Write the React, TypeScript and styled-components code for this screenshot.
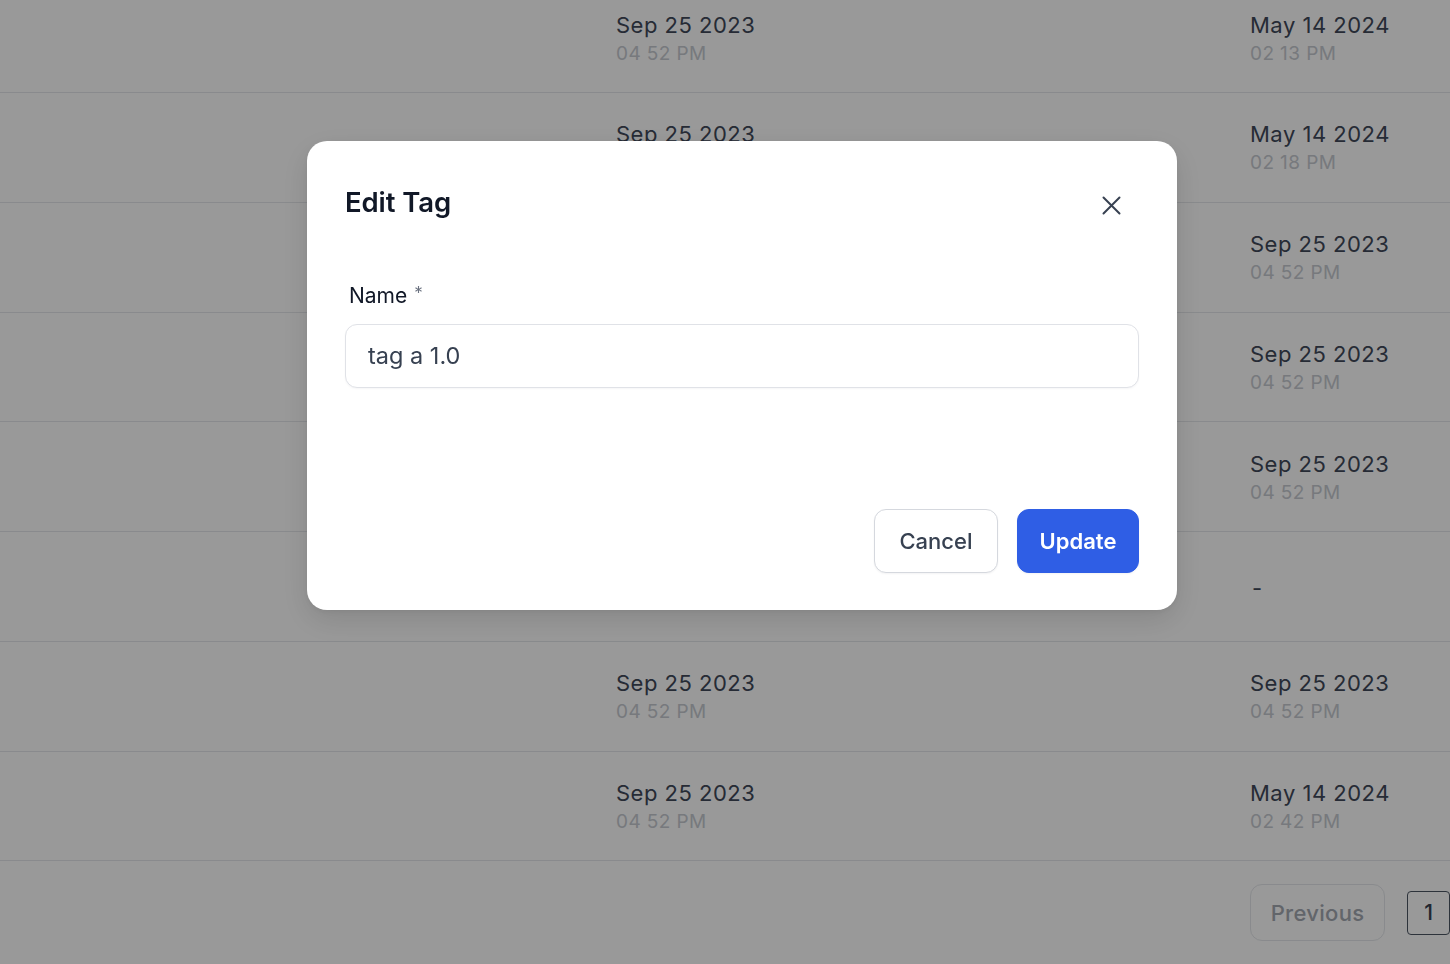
import React from 'react';
import styled, { createGlobalStyle } from 'styled-components';

const GlobalStyle = createGlobalStyle`
  html, body {
    margin: 0;
    padding: 0;
    background: #ffffff;
    overflow: hidden;
    height: 964px;
  }
  body {
    font-family: Inter, "Noto Sans", "Liberation Sans", sans-serif;
    color: #374151;
  }
  * { box-sizing: border-box; }
`;

type Stamp = { date: string; time: string } | null;

type RowData = { created: Stamp; updated: Stamp };

const ROWS: RowData[] = [
  { created: { date: 'Sep 25 2023', time: '04 52 PM' }, updated: { date: 'May 14 2024', time: '02 13 PM' } },
  { created: { date: 'Sep 25 2023', time: '04 52 PM' }, updated: { date: 'May 14 2024', time: '02 18 PM' } },
  { created: { date: 'Sep 25 2023', time: '04 52 PM' }, updated: { date: 'Sep 25 2023', time: '04 52 PM' } },
  { created: { date: 'Sep 25 2023', time: '04 52 PM' }, updated: { date: 'Sep 25 2023', time: '04 52 PM' } },
  { created: { date: 'Sep 25 2023', time: '04 52 PM' }, updated: { date: 'Sep 25 2023', time: '04 52 PM' } },
  { created: { date: 'Sep 25 2023', time: '04 52 PM' }, updated: null },
  { created: { date: 'Sep 25 2023', time: '04 52 PM' }, updated: { date: 'Sep 25 2023', time: '04 52 PM' } },
  { created: { date: 'Sep 25 2023', time: '04 52 PM' }, updated: { date: 'May 14 2024', time: '02 42 PM' } },
];

const Page = styled.div`
  margin-top: -16.75px;
  width: 1450px;
`;

const Row = styled.div`
  display: grid;
  grid-template-columns: 616px 634px 1fr;
  height: 109.75px;
  border-bottom: 1px solid #e5e7eb;
  align-items: center;
`;

const Cell = styled.div`
  display: flex;
  flex-direction: column;
  padding-top: 3px;
`;

const DateText = styled.span`
  font-size: 22px;
  line-height: 28px;
  letter-spacing: 0.5px;
  color: #404859;
`;

const TimeText = styled.span`
  font-size: 19px;
  line-height: 29px;
  letter-spacing: 0.4px;
  color: #c6cad1;
`;

const Dash = styled.span`
  font-size: 22px;
  line-height: 28px;
  color: #404859;
  padding-left: 2px;
`;

const Pagination = styled.div`
  display: flex;
  align-items: center;
  padding-left: 1250px;
  padding-top: 23px;
  gap: 22px;
`;

const PrevButton = styled.button`
  width: 135px;
  height: 57px;
  flex-shrink: 0;
  border: 1px solid #e5e7eb;
  border-radius: 12px;
  background: #ffffff;
  font-family: inherit;
  font-size: 22px;
  font-weight: 500;
  color: #a3a8b1;
  letter-spacing: 0.3px;
`;

const PageNumber = styled.button`
  width: 43px;
  height: 44px;
  border: 1.5px solid #4b5563;
  border-radius: 4px;
  background: #ffffff;
  font-family: inherit;
  font-size: 21px;
  font-weight: 500;
  color: #374151;
  flex-shrink: 0;
`;

const Overlay = styled.div`
  position: fixed;
  inset: 0;
  background: rgba(0, 0, 0, 0.4);
`;

const Modal = styled.div`
  position: fixed;
  left: 307px;
  top: 141px;
  width: 870px;
  height: 469px;
  background: #ffffff;
  border-radius: 20px;
  box-shadow: 0 10px 30px rgba(0, 0, 0, 0.12), 0 2px 6px rgba(0, 0, 0, 0.06);
  padding: 43px 38px 37px;
  display: flex;
  flex-direction: column;
`;

const Header = styled.div`
  display: flex;
  justify-content: space-between;
  align-items: flex-start;
`;

const Title = styled.h2`
  margin: 0;
  font-size: 27.5px;
  line-height: 36px;
  font-weight: 600;
  color: #111827;
  letter-spacing: -0.1px;
`;

const CloseButton = styled.button`
  width: 40px;
  height: 40px;
  margin-top: 1.5px;
  margin-right: 8px;
  border: none;
  background: transparent;
  padding: 0;
  display: flex;
  align-items: center;
  justify-content: center;
  color: #374151;
`;

const Field = styled.div`
  display: flex;
  flex-direction: column;
  margin-top: 53px;
  gap: 14px;
`;

const Label = styled.label`
  font-size: 21px;
  line-height: 28px;
  color: #111827;
  padding-left: 4px;
`;

const Required = styled.span`
  color: #6b7280;
  font-size: 17px;
  margin-left: 7px;
  vertical-align: 4px;
`;

const Input = styled.input`
  width: 794px;
  height: 64px;
  border: 1px solid #e0e2e7;
  border-radius: 12px;
  padding: 0 22px;
  font-family: inherit;
  font-size: 23.5px;
  color: #374151;
  outline: none;
  box-shadow: 0 1px 2px rgba(16, 24, 40, 0.04);
`;

const Footer = styled.div`
  display: flex;
  justify-content: flex-end;
  gap: 19px;
  margin-top: auto;
`;

const Button = styled.button<{ primary?: boolean }>`
  height: 64px;
  width: ${p => (p.primary ? '122px' : '124px')};
  border-radius: 12px;
  font-family: inherit;
  font-size: 22px;
  font-weight: ${p => (p.primary ? 600 : 500)};
  border: 1px solid ${p => (p.primary ? '#2f5ee5' : '#d5d8de')};
  background: ${p => (p.primary ? '#2f5ee5' : '#ffffff')};
  color: ${p => (p.primary ? '#ffffff' : '#374151')};
  box-shadow: 0 1px 2px rgba(16, 24, 40, 0.05);
`;

const StampCell: React.FC<{ stamp: Stamp }> = ({ stamp }) => (
  <Cell>
    {stamp ? (
      <>
        <DateText>{stamp.date}</DateText>
        <TimeText>{stamp.time}</TimeText>
      </>
    ) : (
      <Dash>-</Dash>
    )}
  </Cell>
);

const App: React.FC = () => {
  return (
    <>
      <GlobalStyle />
      <Page>
        {ROWS.map((row, i) => (
          <Row key={i}>
            <div />
            <StampCell stamp={row.created} />
            <StampCell stamp={row.updated} />
          </Row>
        ))}
        <Pagination>
          <PrevButton disabled>Previous</PrevButton>
          <PageNumber>1</PageNumber>
        </Pagination>
      </Page>
      <Overlay />
      <Modal role="dialog">
        <Header>
          <Title>Edit Tag</Title>
          <CloseButton aria-label="Close">
            <svg width="19" height="19" viewBox="0 0 19 19" fill="none" stroke="currentColor" strokeWidth="2" strokeLinecap="round">
              <path d="M1.5 1.5 L17.5 17.5 M17.5 1.5 L1.5 17.5" />
            </svg>
          </CloseButton>
        </Header>
        <Field>
          <Label>
            Name<Required>*</Required>
          </Label>
          <Input defaultValue="tag a 1.0" />
        </Field>
        <Footer>
          <Button>Cancel</Button>
          <Button primary>Update</Button>
        </Footer>
      </Modal>
    </>
  );
};

export default App;
